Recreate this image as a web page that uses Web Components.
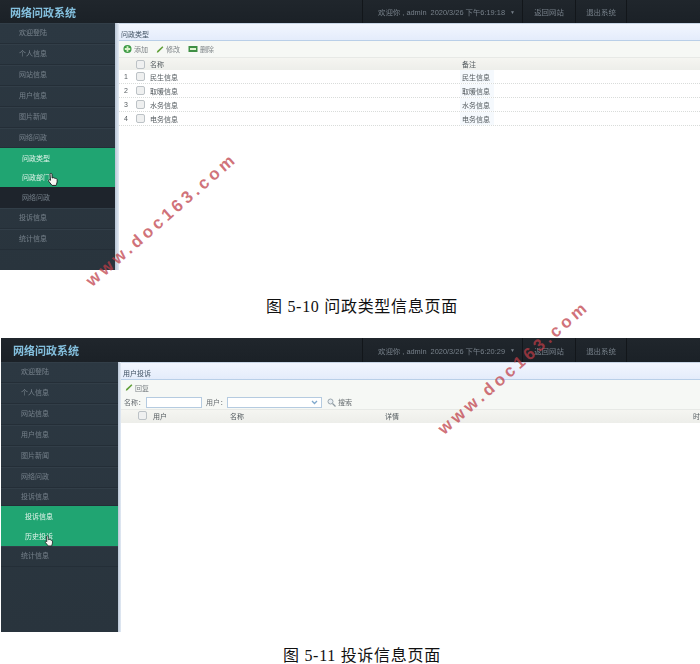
<!DOCTYPE html>
<html lang="zh">
<head>
<meta charset="utf-8">
<title>网络问政系统</title>
<style>
  html, body { margin: 0; padding: 0; background: #fff; }
  body { width: 700px; height: 664px; overflow: hidden; position: relative;
    font-family: "Liberation Sans", "Noto Sans CJK SC", sans-serif; }
  #second { margin-left: 1px; }
</style>
</head>
<body>
<admin-shot id="first" welcome="欢迎你 , admin&nbsp; 2020/3/26 下午6:19:18"
  style="--shot-h:270px;--top-h:23px;--side-w:115px;--strip-w:4px;--brand-w:362px;--brand-pad:10px;--item-pad:19px;--sub-pad:22px;--sub-h:19.500px">
  <side-item slot="menu">欢迎登陆</side-item>
  <side-item slot="menu">个人信息</side-item>
  <side-item slot="menu">网站信息</side-item>
  <side-item slot="menu">用户信息</side-item>
  <side-item slot="menu">图片新闻</side-item>
  <side-item slot="menu" style="height:20px">网络问政</side-item>
  <side-group slot="menu">
    <side-item kind="green">问政类型</side-item>
    <side-item kind="green">问政部门</side-item>
  </side-group>
  <side-item slot="menu" kind="dark">网络问政</side-item>
  <side-item slot="menu">投诉信息</side-item>
  <side-item slot="menu">统计信息</side-item>
  <hand-cursor slot="menu" style="left:47px;top:149px;width:12px;height:15px"></hand-cursor>
  <type-panel></type-panel>
</admin-shot>
<fig-caption style="--h:68px;--x:266px;--y:25px">图 5-10 问政类型信息页面</fig-caption>

<admin-shot id="second" welcome="欢迎你 , admin&nbsp; 2020/3/26 下午6:20:29"
  style="--shot-h:294px;--top-h:24px;--side-w:117px;--strip-w:3px;--brand-w:361px;--brand-pad:12px;--item-pad:20px;--sub-pad:24px;--sub-h:20px">
  <side-item slot="menu">欢迎登陆</side-item>
  <side-item slot="menu">个人信息</side-item>
  <side-item slot="menu">网站信息</side-item>
  <side-item slot="menu">用户信息</side-item>
  <side-item slot="menu">图片新闻</side-item>
  <side-item slot="menu">网络问政</side-item>
  <side-item slot="menu" style="height:18px">投诉信息</side-item>
  <side-group slot="menu">
    <side-item kind="green">投诉信息</side-item>
    <side-item kind="green">历史投诉</side-item>
  </side-group>
  <side-item slot="menu">统计信息</side-item>
  <hand-cursor slot="menu" style="left:43px;top:173px;width:10px;height:12px"></hand-cursor>
  <complaint-panel></complaint-panel>
</admin-shot>
<fig-caption style="--h:32px;--x:283px;--y:12px">图 5-11 投诉信息页面</fig-caption>

<water-mark style="left:65px;top:209.500px"></water-mark>
<water-mark style="left:417px;top:358px"></water-mark>

<script>
const CELL_FONT = `"Liberation Sans", "Noto Sans CJK SC", sans-serif`;

class AdminShot extends HTMLElement {
  constructor() {
    super();
    this.attachShadow({ mode: "open" });
  }

  connectedCallback() {
    this.shadowRoot.innerHTML = `
      <style>
        :host { display: block; height: var(--shot-h); font-family: ${CELL_FONT}; overflow: hidden; }
        .wrap { filter: blur(.35px); }
        .top { height: var(--top-h); background: linear-gradient(#20262c, #1b2127); display: flex; align-items: center; }
        .brand { width: var(--brand-w); padding-left: var(--brand-pad); box-sizing: border-box;
          font: bold 11px ${CELL_FONT}; color: #84c0de; }
        .top-item { height: 100%; display: flex; align-items: center; justify-content: center;
          box-sizing: border-box; border-left: 1px solid #12161a; font-size: 7.400px; color: #77808a; }
        .who { width: 160px; padding-left: 8px; white-space: nowrap; }
        .who i { font-style: normal; font-size: 5px; margin-left: 5px; }
        .link { width: 53px; }
        .link.last { width: 52px; border-right: 1px solid #12161a; }
        .body { display: flex; height: calc(var(--shot-h) - var(--top-h)); }
        .side { position: relative; width: var(--side-w); flex: none; background: linear-gradient(#2c3842, #29343d); }
        .strip { width: var(--strip-w); flex: none; background: linear-gradient(90deg, #b9c6d6, #e3ebf5); }
        .main { flex: 1; min-width: 0; background: #fff; }
      </style>
      <div class="wrap">
        <div class="top">
          <div class="brand">网络问政系统</div>
          <div class="top-item who">${this.getAttribute("welcome")}<i>▼</i></div>
          <div class="top-item link">返回网站</div>
          <div class="top-item link last">退出系统</div>
        </div>
        <div class="body">
          <div class="side"><slot name="menu"></slot></div>
          <div class="strip"></div>
          <div class="main"><slot></slot></div>
        </div>
      </div>
    `;
  }
}

class SideItem extends HTMLElement {
  constructor() {
    super();
    this.attachShadow({ mode: "open" });
    this.shadowRoot.innerHTML = `
      <style>
        :host { display: flex; align-items: center; box-sizing: border-box; height: 21px;
          padding-left: var(--item-pad); padding-bottom: 2px; font-size: 7px; color: #76818b;
          border-bottom: 1px solid #242e37; box-shadow: inset 0 1px 0 #323e48; }
        :host([kind="green"]) { height: var(--sub-h); padding-bottom: 0; padding-left: var(--sub-pad); color: #e4f5ec;
          border: 0; box-shadow: none; background: transparent; }
        :host([kind="dark"]) { padding-left: var(--sub-pad); background: #1e242c; border: 0; box-shadow: none; }
      </style>
      <slot></slot>
    `;
  }
}

class SideGroup extends HTMLElement {
  constructor() {
    super();
    this.attachShadow({ mode: "open" });
    this.shadowRoot.innerHTML = `
      <style>:host { display: block; background: #20a572; }</style>
      <slot></slot>
    `;
  }
}

class HandCursor extends HTMLElement {
  constructor() {
    super();
    this.attachShadow({ mode: "open" });
    this.shadowRoot.innerHTML = `
      <style>
        :host { position: absolute; display: block; }
        svg { display: block; width: 100%; height: 100%; }
      </style>
      <svg viewBox="0 0 13 15">
        <path d="M3.500 1.200c.8-.7 1.800-.3 1.900.7l.2 4 .9-.4c.7-.2 1.200.1 1.400.5.6-.3 1.300-.1 1.500.5.7-.2 1.500.2 1.600 1 .3 1.700 0 3.600-.7 5.200l-.4 1.200H5.500L2.200 9.900C1.400 8.900 1.500 8 2.300 7.800c.5-.1 1 .2 1.400.6L3.300 2.200c0-.4 0-.8.2-1z"
          fill="#f6f6f2" stroke="#161a1c" stroke-width="1"/>
      </svg>
    `;
  }
}

const panelStyle = `
  :host { display: block; font: 7px ${CELL_FONT}; color: #555c60; }
  .title { height: 18px; box-sizing: border-box; display: flex; align-items: center; padding: 3px 0 0 2px;
    background: linear-gradient(#f2f6fe, #e4ecfb); border-top: 1px solid #c9d6e6; border-bottom: 1px solid #b9cfe8;
    color: #3d4f60; }
  .bar { height: 16px; display: flex; align-items: center; padding-left: 4px; gap: 8px; background: #f6f8f5; }
  .tool { display: inline-flex; align-items: center; gap: 2px; color: #7c8286; }
  .head, .row { display: grid; grid-template-columns: var(--cols); align-items: center; }
  .head { height: 13px; background: linear-gradient(#f5f5f1, #edeeea); border-top: 1px solid #e7e9e6; box-sizing: border-box; }
  .row { height: 14px; box-sizing: border-box; border-bottom: 1px dotted #d9dcda; }
  .num { text-align: center; }
  .box { width: 7px; height: 7px; border: 1px solid #bcc2c6; border-radius: 2px; background: #eff0f0; display: block; margin: 0 auto; }
  .cell { padding-left: 2px; white-space: nowrap; }
  .note { align-self: stretch; display: flex; align-items: center; border-left: 1px solid #fff;
    padding-left: 2px; margin-right: 206px; background: #f5f9fd; }
`;

const ICON_ADD = `<svg width="9" height="10" viewBox="0 0 10 10"><circle cx="5" cy="5" r="4.500" fill="#3d9b45"/><path d="M5 2v6M2 5h6" stroke="#d9f2c9" stroke-width="2"/></svg>`;
const ICON_EDIT = `<svg width="8" height="9" viewBox="0 0 10 10"><path d="M8 1l1.200 1.200L3 8.500 1 9l.5-2z" fill="#5f9e35"/></svg>`;
const ICON_DEL = `<svg width="10" height="8" viewBox="0 0 10 8"><rect x=".5" y="1" width="9" height="6" fill="#3f8f45"/><rect x="2" y="3" width="6" height="2" fill="#dff3d2"/></svg>`;

class TypePanel extends HTMLElement {
  constructor() {
    super();
    this.attachShadow({ mode: "open" });
    this._rows = ["民生信息", "取暖信息", "水务信息", "电务信息"];
  }

  connectedCallback() {
    this.shadowRoot.innerHTML = `
      <style>${panelStyle}
        :host { --cols: 14px 14px 312px 1fr; }
        .cell { padding-left: 3px; }
        .note { padding-left: 2px; }
      </style>
      <div class="title">问政类型</div>
      <div class="bar">
        <span class="tool">${ICON_ADD}添加</span>
        <span class="tool">${ICON_EDIT}修改</span>
        <span class="tool">${ICON_DEL}删除</span>
      </div>
      <div class="head">
        <span></span><span class="box"></span><span class="cell">名称</span><span class="cell">备注</span>
      </div>
      ${this._rows.map((name, i) => `
        <div class="row">
          <span class="num">${i + 1}</span><span class="box"></span>
          <span class="cell">${name}</span><span class="note">${name}</span>
        </div>`).join("")}
    `;
  }
}

class ComplaintPanel extends HTMLElement {
  constructor() {
    super();
    this.attachShadow({ mode: "open" });
  }

  connectedCallback() {
    this.shadowRoot.innerHTML = `
      <style>${panelStyle}
        :host { --cols: 26px 4px 77px 155px 308px 1fr; }
        .bar { height: 15px; }
        .search { height: 14px; display: flex; align-items: center; padding-left: 3px; background: #f6f8f5; color: #666c70; }
        .input { height: 11px; box-sizing: border-box; border: 1px solid #b5cbe0; background: #fff; }
        .name { width: 56px; margin: 0 4px 0 1px; }
        .combo { width: 95px; display: flex; justify-content: flex-end; align-items: center; padding-right: 3px; }
        .find { display: inline-flex; align-items: center; gap: 2px; margin-left: 5px; }
        .head { height: 14px; padding-bottom: 2px; }
        .head .box { margin: 0 0 0 -2px; }
      </style>
      <div class="title">用户投诉</div>
      <div class="bar"><span class="tool">${ICON_EDIT}回复</span></div>
      <div class="search">
        <span>名称：</span><span class="input name"></span>
        <span>用户：</span>
        <span class="input combo"><svg width="7" height="5" viewBox="0 0 7 5"><path d="M1 1l2.500 2.500L6 1" fill="none" stroke="#7fa8cc" stroke-width="1.300"/></svg></span>
        <span class="find"><svg width="9" height="9" viewBox="0 0 9 9"><circle cx="3.500" cy="3.500" r="2.500" fill="#e8eef3" stroke="#9aa6ae"/><path d="M5.500 5.500L8.500 8.500" stroke="#8d99a2" stroke-width="1.300"/></svg>搜索</span>
      </div>
      <div class="head">
        <span class="box" style="justify-self:end"></span><span></span>
        <span class="cell">用户</span><span class="cell">名称</span><span class="cell">详情</span><span class="cell">时</span>
      </div>
    `;
  }
}

class FigCaption extends HTMLElement {
  constructor() {
    super();
    this.attachShadow({ mode: "open" });
    this.shadowRoot.innerHTML = `
      <style>
        :host { display: block; height: var(--h); box-sizing: border-box; letter-spacing: .7px;
          padding: var(--y) 0 0 var(--x); font: 16px/24px "Liberation Serif", "Noto Sans CJK SC", serif; color: #111; }
      </style>
      <slot></slot>
    `;
  }
}

class WaterMark extends HTMLElement {
  constructor() {
    super();
    this.attachShadow({ mode: "open" });
    this.shadowRoot.innerHTML = `
      <style>
        :host { position: absolute; display: block; transform: rotate(-41deg); transform-origin: 50% 50%;
          font: bold 17px/20px "Liberation Sans", sans-serif; letter-spacing: 3.700px; white-space: nowrap;
          color: rgba(190, 60, 70, .72); pointer-events: none; }
      </style>
      www.doc163.com
    `;
  }
}

customElements.define("admin-shot", AdminShot);
customElements.define("side-item", SideItem);
customElements.define("side-group", SideGroup);
customElements.define("hand-cursor", HandCursor);
customElements.define("type-panel", TypePanel);
customElements.define("complaint-panel", ComplaintPanel);
customElements.define("fig-caption", FigCaption);
customElements.define("water-mark", WaterMark);
</script>
</body>
</html>
